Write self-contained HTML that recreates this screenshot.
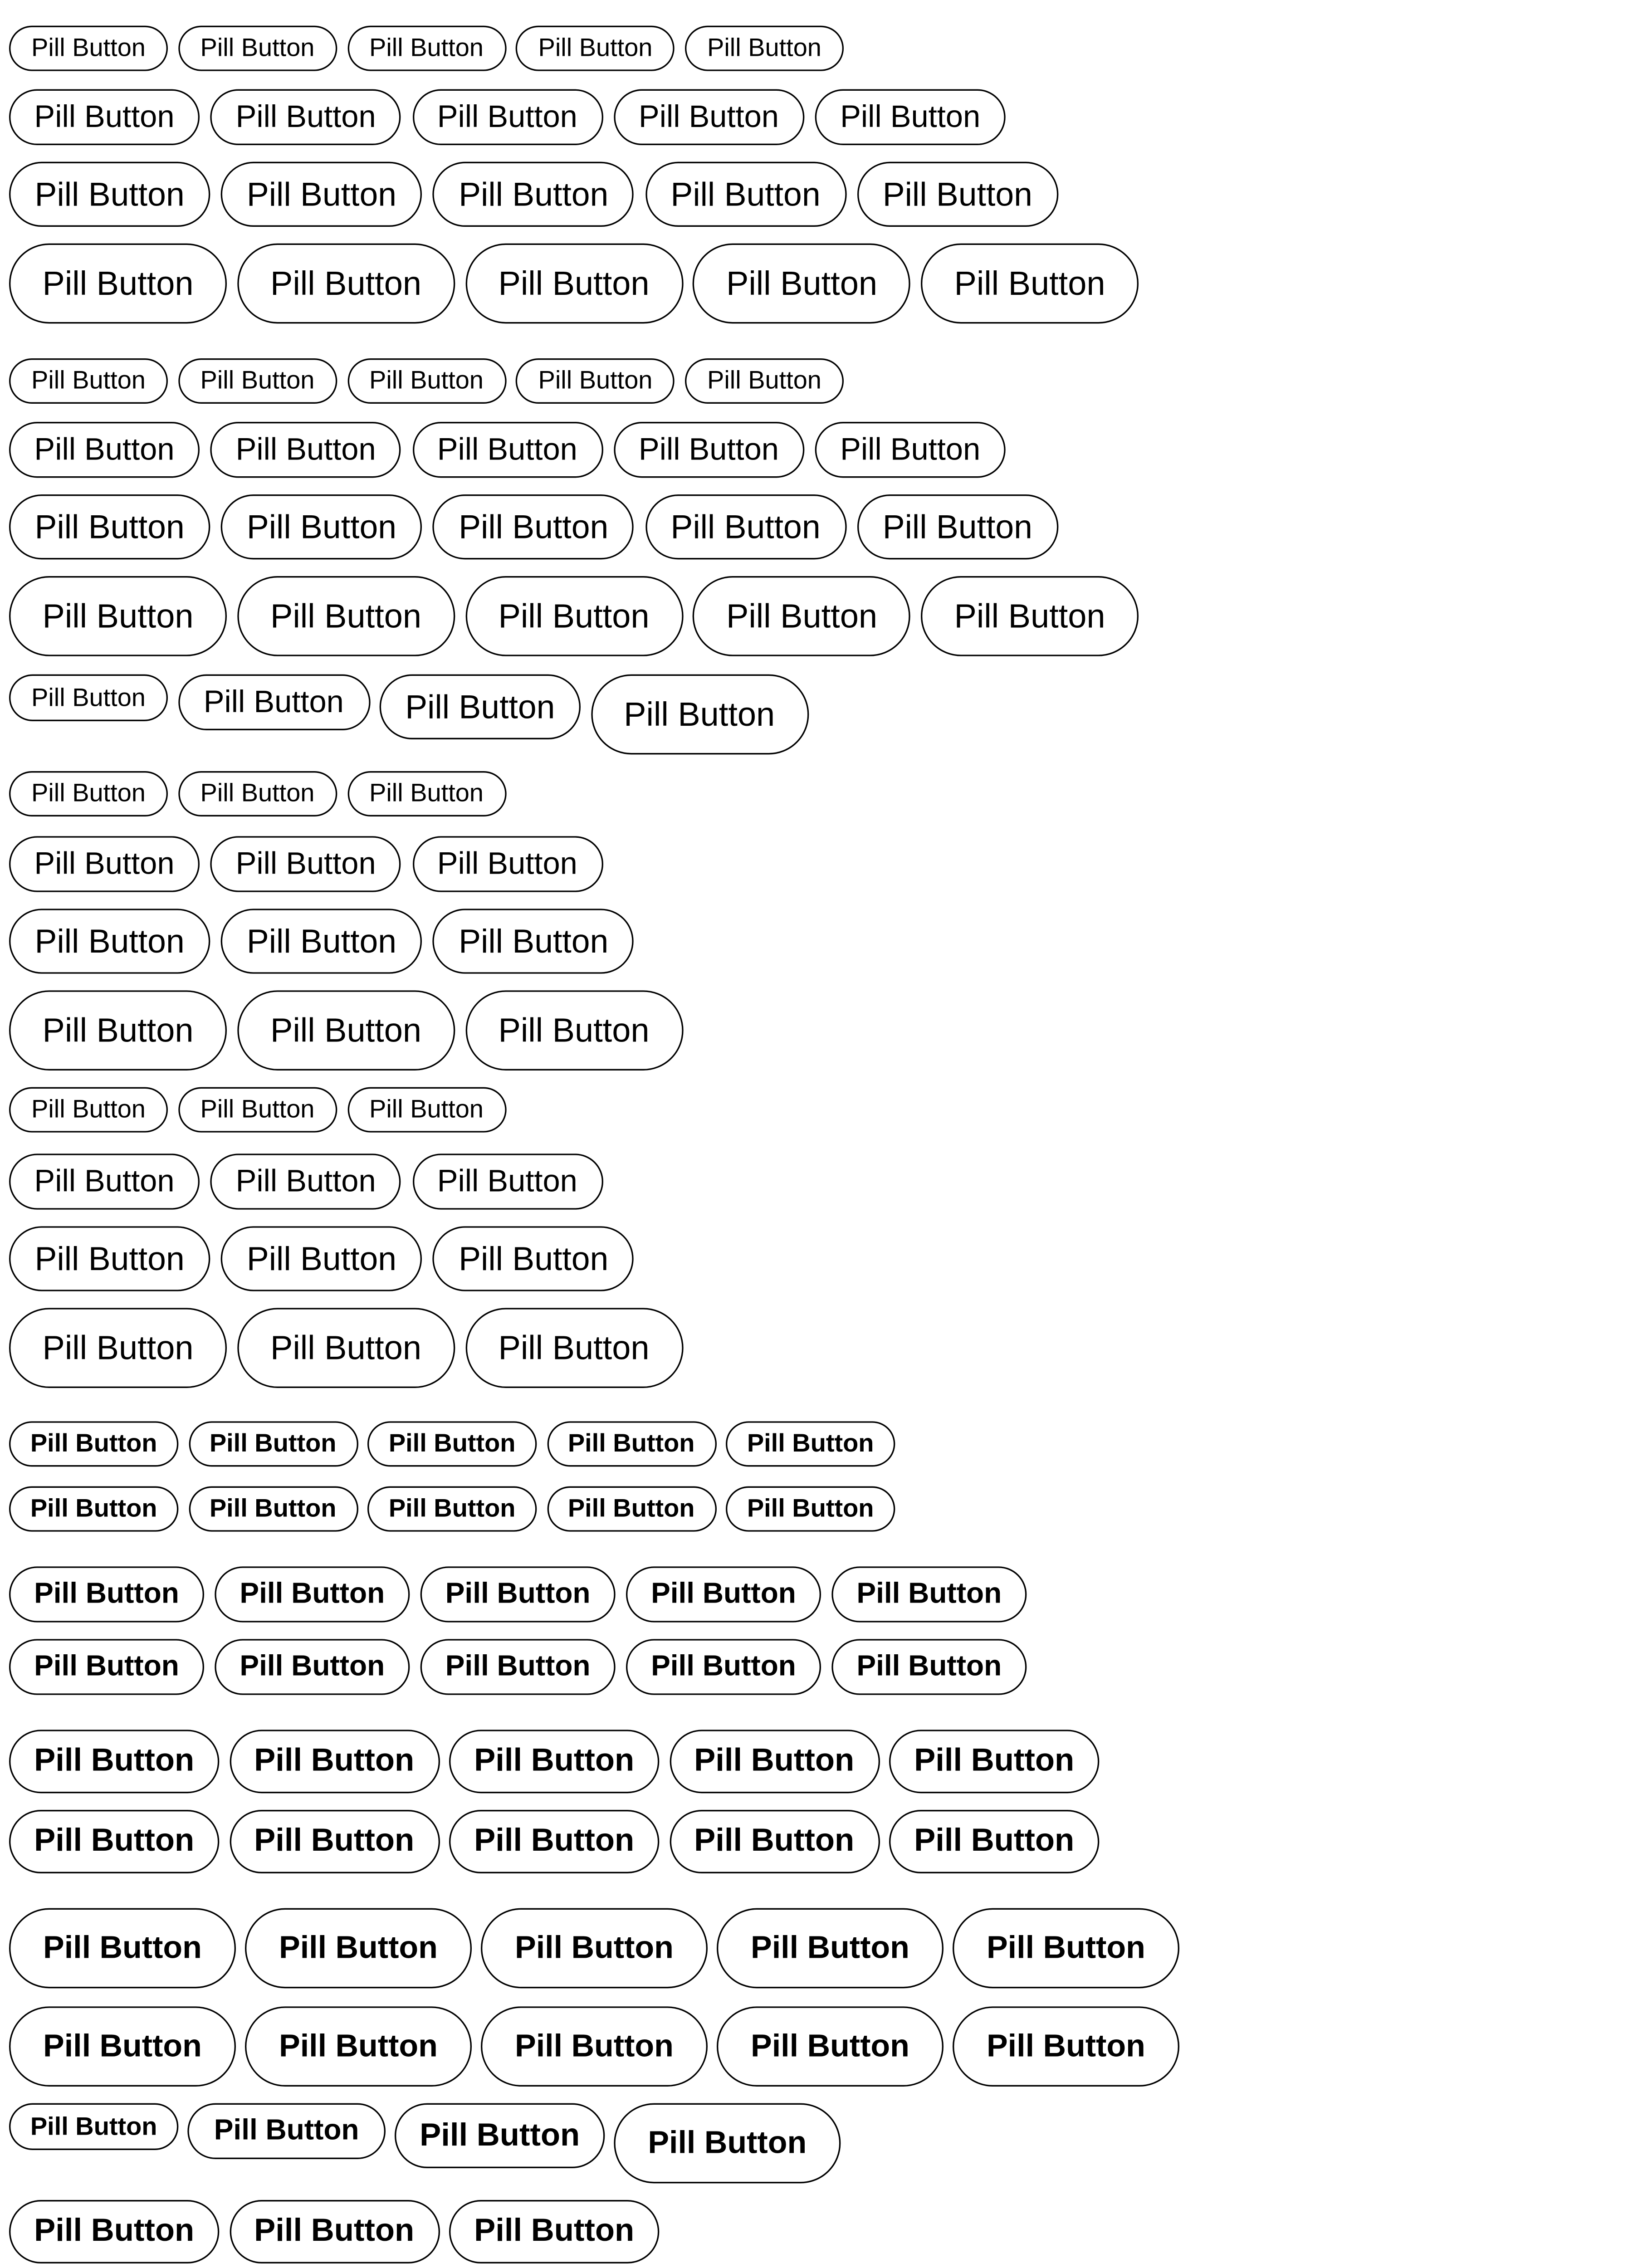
<!DOCTYPE html>
<html><head><meta charset="utf-8">
<style>
html,body{margin:0;padding:0;background:#fff;width:3600px;height:5256px;overflow:hidden;}
#w{position:absolute;left:0;top:0;width:1080px;height:1576px;overflow:hidden;transform:scale(3.33333);transform-origin:0 0;font-family:"Liberation Sans",sans-serif;color:#000;}
.r{position:absolute;left:6px;display:flex;align-items:flex-start;gap:6.75px;}
.r span{box-sizing:border-box;border:1.2px solid #000;border-radius:999px;display:flex;align-items:center;justify-content:center;white-space:nowrap;flex:none;}
.a{width:105px;height:30px;font-size:16.8px;}
.b{width:126px;height:37px;font-size:20.6px;}
.c{width:133px;height:43px;font-size:22px;}
.d{width:144px;height:53px;font-size:22.2px;}
.e{width:112px;height:30px;font-size:16.8px;font-weight:bold;}
.f{width:129px;height:37px;font-size:19.2px;font-weight:bold;}
.g{width:139px;height:42px;font-size:21.2px;font-weight:bold;}
.h{width:150px;height:53px;font-size:21px;font-weight:bold;}
.ga{gap:6.75px}.gb{gap:7.25px}.gc{gap:7.2px}.gd{gap:6.75px}
.ge{gap:6.5px}.gf{gap:7px}.gg{gap:6.5px}.gh{gap:6px}
</style></head><body><div id="w">
<div class="r ga" style="top:17px"><span class="a">Pill Button</span><span class="a">Pill Button</span><span class="a">Pill Button</span><span class="a">Pill Button</span><span class="a">Pill Button</span></div>
<div class="r gb" style="top:59px"><span class="b">Pill Button</span><span class="b">Pill Button</span><span class="b">Pill Button</span><span class="b">Pill Button</span><span class="b">Pill Button</span></div>
<div class="r gc" style="top:107px"><span class="c">Pill Button</span><span class="c">Pill Button</span><span class="c">Pill Button</span><span class="c">Pill Button</span><span class="c">Pill Button</span></div>
<div class="r gd" style="top:161px"><span class="d">Pill Button</span><span class="d">Pill Button</span><span class="d">Pill Button</span><span class="d">Pill Button</span><span class="d">Pill Button</span></div>

<div class="r ga" style="top:237px"><span class="a">Pill Button</span><span class="a">Pill Button</span><span class="a">Pill Button</span><span class="a">Pill Button</span><span class="a">Pill Button</span></div>
<div class="r gb" style="top:279px"><span class="b">Pill Button</span><span class="b">Pill Button</span><span class="b">Pill Button</span><span class="b">Pill Button</span><span class="b">Pill Button</span></div>
<div class="r gc" style="top:327px"><span class="c">Pill Button</span><span class="c">Pill Button</span><span class="c">Pill Button</span><span class="c">Pill Button</span><span class="c">Pill Button</span></div>
<div class="r gd" style="top:381px"><span class="d">Pill Button</span><span class="d">Pill Button</span><span class="d">Pill Button</span><span class="d">Pill Button</span><span class="d">Pill Button</span></div>

<div class="r" style="top:446px;gap:6.5px"><span class="a" style="height:31px">Pill Button</span><span class="b" style="width:127px">Pill Button</span><span class="c">Pill Button</span><span class="d">Pill Button</span></div>

<div class="r ga" style="top:510px"><span class="a">Pill Button</span><span class="a">Pill Button</span><span class="a">Pill Button</span></div>
<div class="r gb" style="top:553px"><span class="b">Pill Button</span><span class="b">Pill Button</span><span class="b">Pill Button</span></div>
<div class="r gc" style="top:601px"><span class="c">Pill Button</span><span class="c">Pill Button</span><span class="c">Pill Button</span></div>
<div class="r gd" style="top:655px"><span class="d">Pill Button</span><span class="d">Pill Button</span><span class="d">Pill Button</span></div>

<div class="r ga" style="top:719px"><span class="a">Pill Button</span><span class="a">Pill Button</span><span class="a">Pill Button</span></div>
<div class="r gb" style="top:763px"><span class="b">Pill Button</span><span class="b">Pill Button</span><span class="b">Pill Button</span></div>
<div class="r gc" style="top:811px"><span class="c">Pill Button</span><span class="c">Pill Button</span><span class="c">Pill Button</span></div>
<div class="r gd" style="top:865px"><span class="d">Pill Button</span><span class="d">Pill Button</span><span class="d">Pill Button</span></div>

<div class="r ge" style="top:940px"><span class="e">Pill Button</span><span class="e">Pill Button</span><span class="e">Pill Button</span><span class="e">Pill Button</span><span class="e">Pill Button</span></div>
<div class="r ge" style="top:983px"><span class="e">Pill Button</span><span class="e">Pill Button</span><span class="e">Pill Button</span><span class="e">Pill Button</span><span class="e">Pill Button</span></div>
<div class="r gf" style="top:1036px"><span class="f">Pill Button</span><span class="f">Pill Button</span><span class="f">Pill Button</span><span class="f">Pill Button</span><span class="f">Pill Button</span></div>
<div class="r gf" style="top:1084px"><span class="f">Pill Button</span><span class="f">Pill Button</span><span class="f">Pill Button</span><span class="f">Pill Button</span><span class="f">Pill Button</span></div>
<div class="r gg" style="top:1144px"><span class="g">Pill Button</span><span class="g">Pill Button</span><span class="g">Pill Button</span><span class="g">Pill Button</span><span class="g">Pill Button</span></div>
<div class="r gg" style="top:1197px"><span class="g">Pill Button</span><span class="g">Pill Button</span><span class="g">Pill Button</span><span class="g">Pill Button</span><span class="g">Pill Button</span></div>
<div class="r gh" style="top:1262px"><span class="h">Pill Button</span><span class="h">Pill Button</span><span class="h">Pill Button</span><span class="h">Pill Button</span><span class="h">Pill Button</span></div>
<div class="r gh" style="top:1327px"><span class="h">Pill Button</span><span class="h">Pill Button</span><span class="h">Pill Button</span><span class="h">Pill Button</span><span class="h">Pill Button</span></div>

<div class="r" style="top:1391px;gap:6px"><span class="e" style="height:31px">Pill Button</span><span class="f" style="width:131px">Pill Button</span><span class="g" style="height:43px">Pill Button</span><span class="h">Pill Button</span></div>

<div class="r gg" style="top:1455px"><span class="g">Pill Button</span><span class="g">Pill Button</span><span class="g">Pill Button</span></div>
<div class="r gg" style="top:1509px"><span class="g">Pill Button</span><span class="g">Pill Button</span><span class="g">Pill Button</span></div>
</div></body></html>
